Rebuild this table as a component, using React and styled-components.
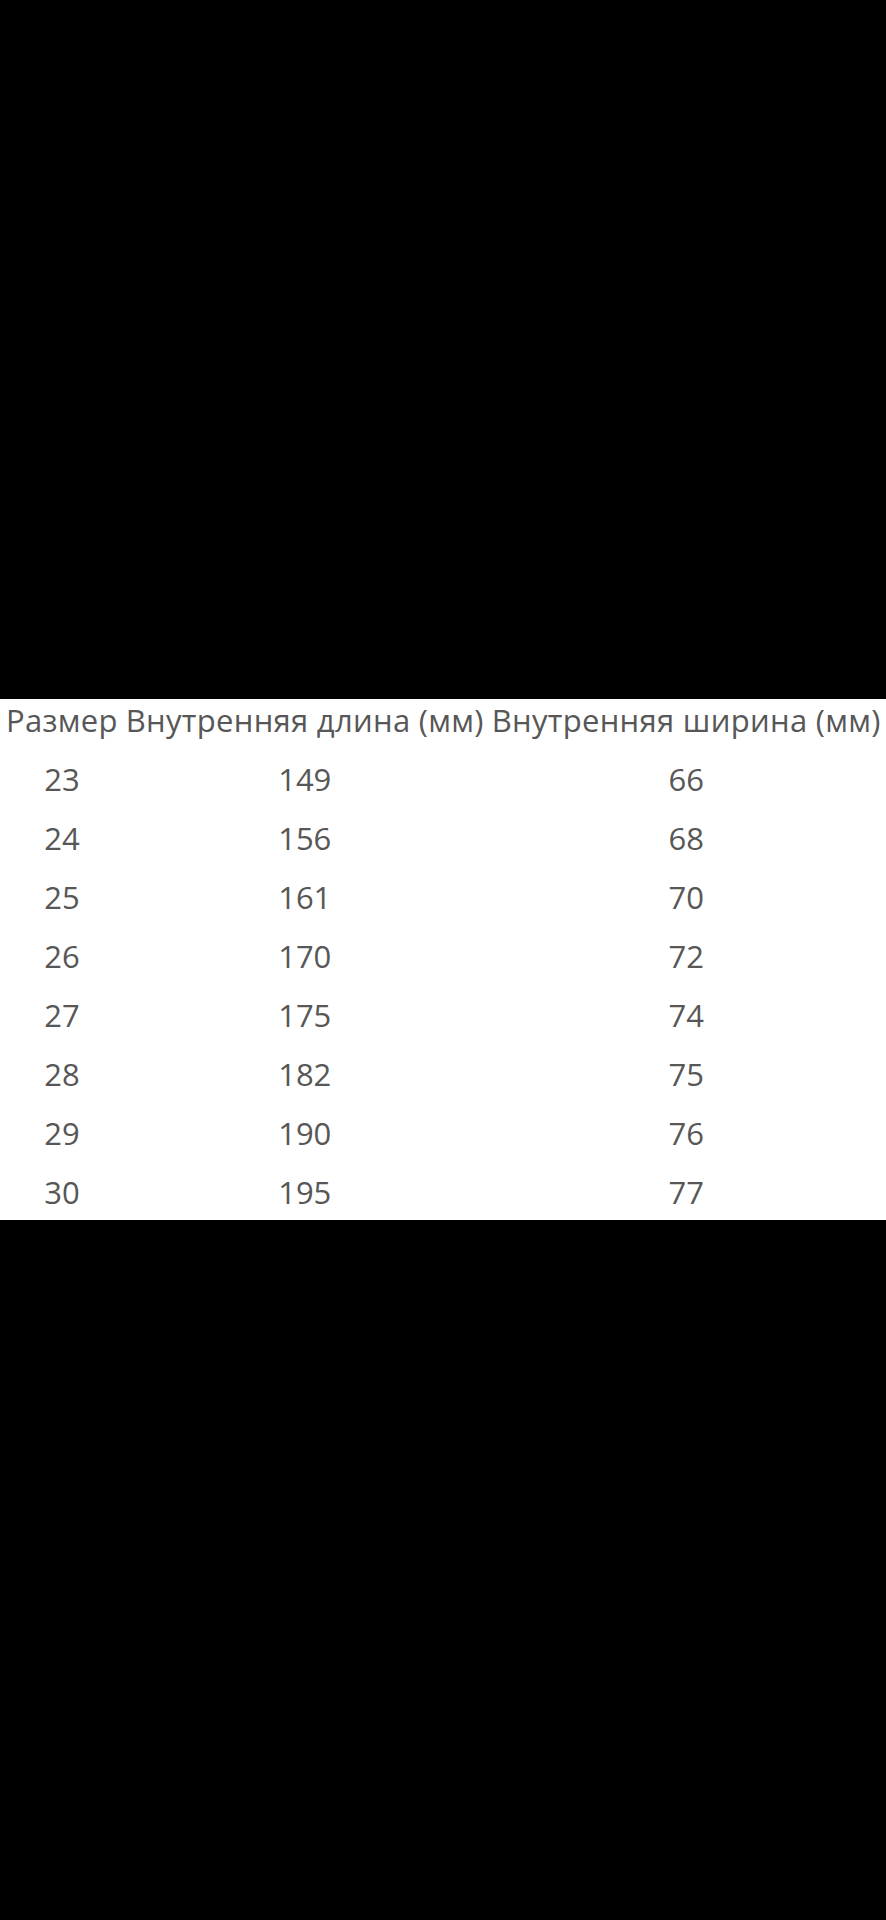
import styled, { createGlobalStyle } from "styled-components";

const rows = [
    ["23", "149", "66"],
    ["24", "156", "68"],
    ["25", "161", "70"],
    ["26", "170", "72"],
    ["27", "175", "74"],
    ["28", "182", "75"],
    ["29", "190", "76"],
    ["30", "195", "77"],
]

const GlobalStyle = createGlobalStyle`
    html, body {
        margin: 0;
        padding: 0;
        background-color: #000;
    }
`

const App = () =>{
    return(
        <Page>
            <GlobalStyle />
            <Sheet>
                <SizeTable>
                    <thead>
                        <tr>
                            <HeadCell>Размер</HeadCell>
                            <HeadCell>Внутренняя длина (мм)</HeadCell>
                            <HeadCell>Внутренняя ширина (мм)</HeadCell>
                        </tr>
                    </thead>
                    <tbody>
                        {rows.map((row)=>{
                            return(
                                <tr key={row[0]}>
                                    {row.map((value, i)=>(
                                        <Cell key={i}>{value}</Cell>
                                    ))}
                                </tr>
                            )
                        })}
                    </tbody>
                </SizeTable>
            </Sheet>
        </Page>
    );
}

const Page = styled.div`
    width: 100%;
    min-height: 1920px;
    background-color: #000;
    padding-top: 699px;
    box-sizing: border-box;
`
const Sheet = styled.section`
    width: 100%;
    height: 521px;
    background-color: #fff;
    overflow: hidden;
`
const SizeTable = styled.table`
    border-collapse: collapse;
    font-family: "Open Sans", "Noto Sans", sans-serif;
    font-size: 31px;
    color: #575757;
    margin-left: 2px;
`
const HeadCell = styled.th`
    font-weight: 400;
    line-height: 42px;
    letter-spacing: 0.3px;
    padding: 0 4px 9px 4px;
    text-align: center;
    white-space: nowrap;
    vertical-align: top;
`
const Cell = styled.td`
    height: 59px;
    line-height: 59px;
    padding: 0 4px;
    text-align: center;
`

export default App;
